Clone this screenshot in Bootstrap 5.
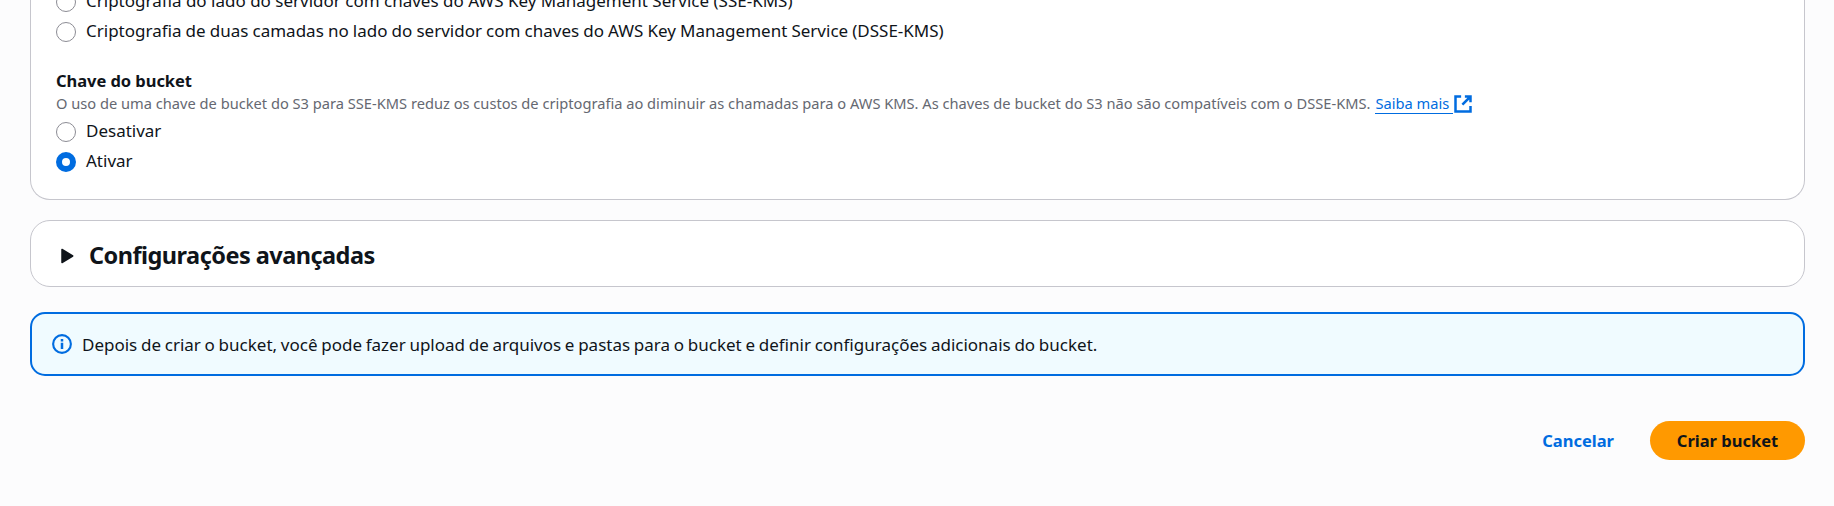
<!DOCTYPE html>
<html lang="pt-BR">
<head>
<meta charset="utf-8">
<meta name="viewport" content="width=device-width, initial-scale=1">
<title>Criar bucket</title>
<link href="https://cdn.jsdelivr.net/npm/bootstrap@5.3.0/dist/css/bootstrap.min.css" rel="stylesheet">
<style>
html{overflow:hidden}
body{font-family:"Noto Sans",sans-serif;font-size:17px;line-height:25px;color:#0f141a;background:#fcfcfd;overflow:hidden}
.page{padding:0 29px 0 30px}
.panel{background:#fff;border:1px solid #c6c6cd;border-radius:20px}
.panel-crypto{margin-top:-12px;border-top:0;border-top-left-radius:0;border-top-right-radius:0;padding:0 25px 26px}
.options{gap:5px}
.option{gap:10px;white-space:nowrap}
.option .form-check-input{width:20px;height:20px;margin:4px 0 0;border:1px solid #8c8c94;background-color:#fff;flex:none}
.option .form-check-input:checked{border:6px solid #006ce0;background-image:none}
.field-title{font-size:16.5px;font-weight:700;letter-spacing:-.05px;margin:25px 0 0;line-height:25px}
.field-help{font-size:14.65px;line-height:20px;height:20px;color:#656871;margin-bottom:5px;white-space:nowrap}
.field-help a{color:#006ce0;text-decoration:none;margin-left:5px}
.field-help a span{box-shadow:0 1px 0 #006ce0;padding-right:4px;display:inline-block;line-height:20px;white-space:pre}
.field-help svg{display:inline-block;margin:-2px 0 0 0;vertical-align:middle}
.panel-advanced{height:67px;margin-top:20px;padding:4px 0 0 30px}
.panel-advanced h2{font-size:23.5px;font-weight:700;letter-spacing:-.53px;line-height:30px;margin:-1px 0 0 15px}
.notice{margin-top:25px;height:64px;border:2px solid #006ce0;border-radius:15px;background:#f0fbff;padding-left:20px;gap:10px}
.notice span{word-spacing:-.7px}
.actions{margin-top:45px;gap:36px}
.btn-cancel,.btn-create{font-size:16.5px;font-weight:700;line-height:25px;border:0;padding:0 0 1px}
.btn-cancel{color:#006ce0}
.btn-create,.btn-create:hover{background:#f90;color:#0f141a;width:155px;height:39px;border-radius:20px}
.ws-b{word-spacing:-.3px}
</style>
</head>
<body>
<main class="page">
  <section class="panel panel-crypto">
    <div class="options d-flex flex-column">
      <label class="option d-flex align-items-start"><input class="form-check-input" type="radio" name="enc"><span>Criptografia do lado do servidor com chaves do AWS Key Management Service (SSE-KMS)</span></label>
      <label class="option d-flex align-items-start"><input class="form-check-input" type="radio" name="enc"><span class="ws-b">Criptografia de duas camadas no lado do servidor com chaves do AWS Key Management Service (DSSE-KMS)</span></label>
    </div>
    <h3 class="field-title">Chave do bucket</h3>
    <div class="field-help">O uso de uma chave de bucket do S3 para SSE-KMS reduz os custos de criptografia ao diminuir as chamadas para o AWS KMS. As chaves de bucket do S3 não são compatíveis com o DSSE-KMS.<a href="#"><span>Saiba mais</span><svg width="20" height="20" viewBox="0 0 16 16" fill="none" stroke="#006ce0" stroke-width="2"><path d="M9.5 2H14v4.5M6.5 2H2v12h12V9.5M14 2 7.5 8.5"/></svg></a></div>
    <div class="options d-flex flex-column">
      <label class="option d-flex align-items-start"><input class="form-check-input" type="radio" name="key"><span>Desativar</span></label>
      <label class="option d-flex align-items-start"><input class="form-check-input" type="radio" name="key" checked><span>Ativar</span></label>
    </div>
  </section>

  <section class="panel panel-advanced d-flex align-items-center">
    <svg width="13" height="16" viewBox="0 0 13 16"><path d="M1 1.5v13L11.7 8Z" fill="#0f141a" stroke="#0f141a" stroke-width="1.5" stroke-linejoin="round"/></svg>
    <h2>Configurações avançadas</h2>
  </section>

  <div class="notice d-flex align-items-center">
    <svg width="20" height="20" viewBox="0 0 16 16" fill="none" stroke="#006ce0" stroke-width="1.7"><circle cx="8" cy="8" r="7.1"/><path d="M8 7v5M8 4v2" stroke-width="2"/></svg>
    <span>Depois de criar o bucket, você pode fazer upload de arquivos e pastas para o bucket e definir configurações adicionais do bucket.</span>
  </div>

  <div class="actions d-flex justify-content-end align-items-center">
    <button class="btn btn-cancel" type="button">Cancelar</button>
    <button class="btn btn-create" type="button">Criar bucket</button>
  </div>
</main>
<script src="https://cdn.jsdelivr.net/npm/bootstrap@5.3.0/dist/js/bootstrap.bundle.min.js"></script>
</body>
</html>
